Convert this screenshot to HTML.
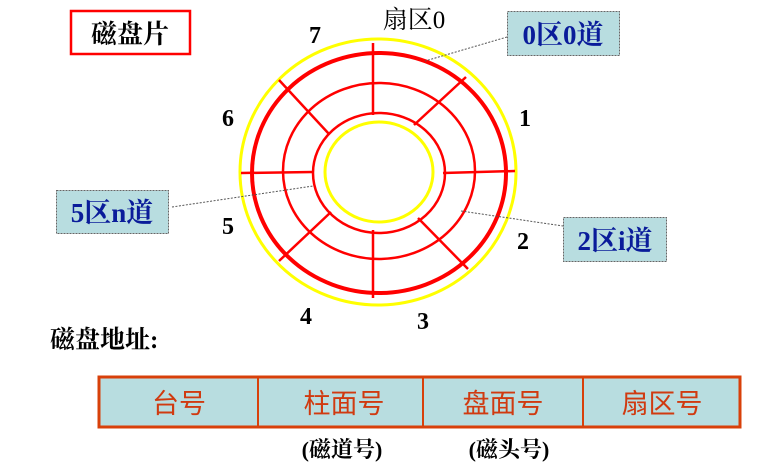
<!DOCTYPE html>
<html><head><meta charset="utf-8"><style>
html,body{margin:0;padding:0;background:#fff;width:759px;height:476px;overflow:hidden}
svg{display:block}
text{font-family:"Liberation Serif","Noto Serif CJK SC",serif}
.b{font-weight:bold;fill:#000;font-size:24px}
.lb{font-family:"Liberation Serif","Noto Serif CJK SC",serif;font-weight:bold;fill:#0a1c9a;font-size:27px}
.t{font-family:"Liberation Sans","Noto Sans CJK SC",sans-serif;fill:#d03a10;font-size:27px}
</style></head><body>
<svg width="759" height="476" viewBox="0 0 759 476">
<ellipse cx="378" cy="172" rx="138" ry="133" fill="none" stroke="#ffff00" stroke-width="3"/>
<ellipse cx="379" cy="172" rx="54" ry="50" fill="none" stroke="#ffff00" stroke-width="3"/>
<ellipse cx="379" cy="173" rx="127" ry="120" fill="none" stroke="#ff0000" stroke-width="4"/>
<ellipse cx="379" cy="171" rx="96" ry="88" fill="none" stroke="#ff0000" stroke-width="2.5"/>
<ellipse cx="379" cy="173" rx="66" ry="60" fill="none" stroke="#ff0000" stroke-width="2.5"/>
<g stroke="#ff0000" stroke-width="2.5">
<line x1="373" y1="43" x2="373" y2="115"/>
<line x1="373" y1="230" x2="373" y2="298"/>
<line x1="241" y1="173" x2="313" y2="172"/>
<line x1="443" y1="173" x2="515" y2="171"/>
<line x1="466" y1="77" x2="414" y2="125"/>
<line x1="279" y1="80" x2="329" y2="134"/>
<line x1="279" y1="261" x2="331" y2="212"/>
<line x1="468" y1="269" x2="418" y2="218"/>
</g>
<g stroke="#555" stroke-width="1" stroke-dasharray="2,1.5">
<line x1="507" y1="37" x2="425" y2="61"/>
<line x1="172" y1="207" x2="313" y2="186"/>
<line x1="461" y1="211" x2="563" y2="226"/>
</g>
<rect x="71" y="11" width="119" height="43" fill="#fff" stroke="#ff0000" stroke-width="2.5"/>
<text x="130" y="43" text-anchor="middle" class="b" style="font-size:26px">磁盘片</text>
<g fill="#b8dde0" stroke="#666" stroke-width="1" stroke-dasharray="2,1">
<rect x="507.5" y="11.5" width="112" height="44"/>
<rect x="56.5" y="190.5" width="112" height="43"/>
<rect x="563.5" y="217.5" width="103" height="44"/>
</g>
<text x="563" y="44" text-anchor="middle" class="lb">0区0道</text>
<text x="112" y="222" text-anchor="middle" class="lb">5区n道</text>
<text x="615" y="250" text-anchor="middle" class="lb">2区i道</text>
<text x="414" y="28" text-anchor="middle" style="font-size:25px;fill:#000">扇区0</text>
<text x="315" y="43" text-anchor="middle" class="b">7</text>
<text x="525" y="126" text-anchor="middle" class="b">1</text>
<text x="228" y="126" text-anchor="middle" class="b">6</text>
<text x="228" y="234" text-anchor="middle" class="b">5</text>
<text x="523" y="249" text-anchor="middle" class="b">2</text>
<text x="306" y="324" text-anchor="middle" class="b">4</text>
<text x="423" y="329" text-anchor="middle" class="b">3</text>
<text x="50" y="348" class="b" style="font-size:25px">磁盘地址:</text>
<rect x="99" y="377" width="641" height="50" fill="#b8dde0" stroke="#d8400a" stroke-width="3"/>
<g stroke="#d8400a" stroke-width="2">
<line x1="258" y1="377" x2="258" y2="427"/>
<line x1="423" y1="377" x2="423" y2="427"/>
<line x1="583" y1="377" x2="583" y2="427"/>
</g>
<text x="179" y="413" text-anchor="middle" class="t">台号</text>
<text x="344" y="413" text-anchor="middle" class="t">柱面号</text>
<text x="503" y="413" text-anchor="middle" class="t">盘面号</text>
<text x="662" y="413" text-anchor="middle" class="t">扇区号</text>
<text x="342" y="457" text-anchor="middle" class="b" style="font-size:22px">(磁道号)</text>
<text x="509" y="457" text-anchor="middle" class="b" style="font-size:22px">(磁头号)</text>
</svg>
</body></html>
